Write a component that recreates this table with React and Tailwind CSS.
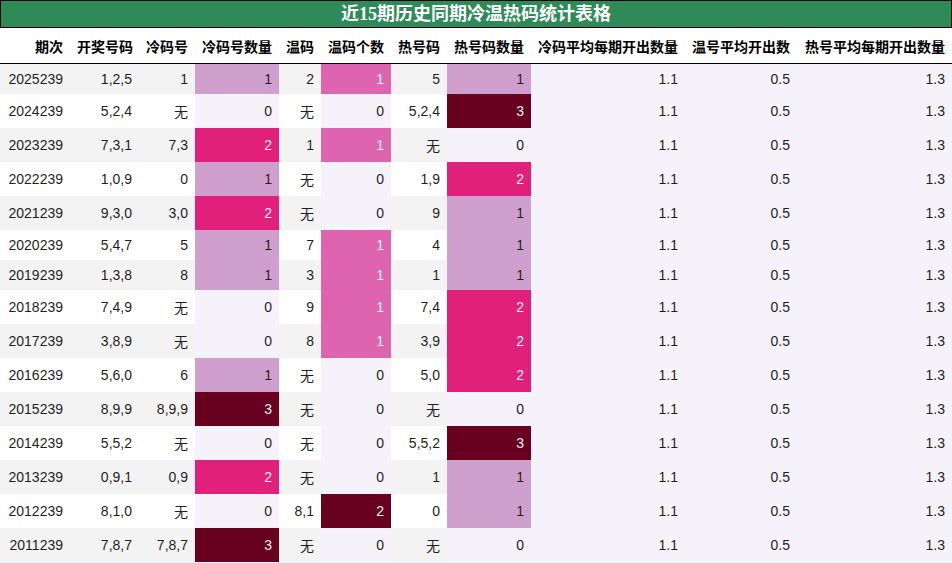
const rows = [
  ['2025239', '1,2,5', '1', 1, '2', 1, '5', 1],
  ['2024239', '5,2,4', '无', 0, '无', 0, '5,2,4', 3],
  ['2023239', '7,3,1', '7,3', 2, '1', 1, '无', 0],
  ['2022239', '1,0,9', '0', 1, '无', 0, '1,9', 2],
  ['2021239', '9,3,0', '3,0', 2, '无', 0, '9', 1],
  ['2020239', '5,4,7', '5', 1, '7', 1, '4', 1],
  ['2019239', '1,3,8', '8', 1, '3', 1, '1', 1],
  ['2018239', '7,4,9', '无', 0, '9', 1, '7,4', 2],
  ['2017239', '3,8,9', '无', 0, '8', 1, '3,9', 2],
  ['2016239', '5,6,0', '6', 1, '无', 0, '5,0', 2],
  ['2015239', '8,9,9', '8,9,9', 3, '无', 0, '无', 0],
  ['2014239', '5,5,2', '无', 0, '无', 0, '5,5,2', 3],
  ['2013239', '0,9,1', '0,9', 2, '无', 0, '1', 1],
  ['2012239', '8,1,0', '无', 0, '8,1', 2, '0', 1],
  ['2011239', '7,8,7', '7,8,7', 3, '无', 0, '无', 0],
];

const headers = ['期次', '开奖号码', '冷码号', '冷码号数量', '温码', '温码个数', '热号码', '热号码数量', '冷码平均每期开出数量', '温号平均开出数', '热号平均每期开出数量'];

// cold / hot count scale
const countScale = {
  0: 'bg-[#f5f3f9] text-[#1f1f1f]',
  1: 'bg-[#cf9fcd] text-[#1f1f1f]',
  2: 'bg-[#e0207a] text-[#f4f4f4]',
  3: 'bg-[#680020] text-[#f0f0f0]',
};

// warm count scale
const warmScale = {
  0: 'bg-[#f5f3f9] text-[#1f1f1f]',
  1: 'bg-[#df64af] text-[#f6f0f4]',
  2: 'bg-[#680020] text-[#f0f0f0]',
};

const cell = 'px-[7px] py-[7px] text-right whitespace-nowrap';

export default function App() {
  return (
    <div
      className="w-[952px] h-[563px] overflow-hidden bg-[#f5f3f9] text-[14px] leading-[normal] text-[#1f1f1f]"
      style={{ fontFamily: '"Liberation Sans", "Noto Sans CJK SC", sans-serif' }}
    >
      {/* Title */}
      <div
        className="border border-black bg-[#2e8b57] text-white text-center font-bold text-[18px] leading-[26px]"
        style={{ fontFamily: '"Liberation Serif", "Noto Sans CJK SC", serif' }}
      >
        近15期历史同期冷温热码统计表格
      </div>

      <table className="w-full table-fixed border-collapse">
        <colgroup>
          <col className="w-[70px]" />
          <col className="w-[69px]" />
          <col className="w-[56px]" />
          <col className="w-[84px]" />
          <col className="w-[42px]" />
          <col className="w-[70px]" />
          <col className="w-[56px]" />
          <col className="w-[84px]" />
          <col className="w-[154px]" />
          <col className="w-[112px]" />
          <col className="w-[155px]" />
        </colgroup>
        <thead>
          <tr className="bg-white border-b border-black">
            {headers.map((h) => (
              <th key={h} className="px-[7px] pt-[8px] pb-[7px] text-right whitespace-nowrap font-bold text-black">{h}</th>
            ))}
          </tr>
        </thead>
        <tbody>
          {rows.map((r, i) => {
            const plain = i % 2 === 0 ? 'bg-[#f3f3f3]' : 'bg-white';
            return (
              <tr key={r[0]}>
                <td className={`${cell} ${plain}`}>{r[0]}</td>
                <td className={`${cell} ${plain}`}>{r[1]}</td>
                <td className={`${cell} ${plain}`}>{r[2]}</td>
                <td className={`${cell} ${countScale[r[3]]}`}>{r[3]}</td>
                <td className={`${cell} ${plain}`}>{r[4]}</td>
                <td className={`${cell} ${warmScale[r[5]]}`}>{r[5]}</td>
                <td className={`${cell} ${plain}`}>{r[6]}</td>
                <td className={`${cell} ${countScale[r[7]]}`}>{r[7]}</td>
                <td className={`${cell} bg-[#f5f3f9]`}>1.1</td>
                <td className={`${cell} bg-[#f5f3f9]`}>0.5</td>
                <td className={`${cell} bg-[#f5f3f9]`}>1.3</td>
              </tr>
            );
          })}
        </tbody>
      </table>
    </div>
  );
}
